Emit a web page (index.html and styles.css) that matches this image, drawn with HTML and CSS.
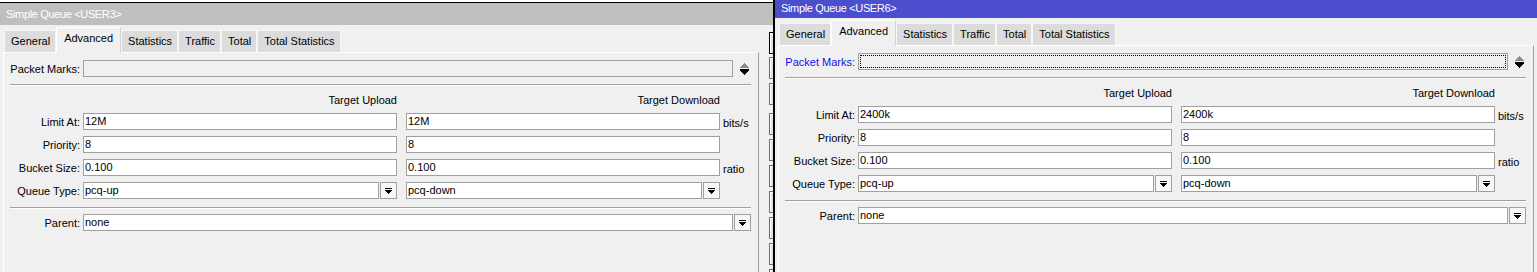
FILE: index.html
```html
<!DOCTYPE html>
<html lang="en">
  <head>
    <meta charset="UTF-8" />
    <meta name="viewport" content="width=device-width, initial-scale=1.0" />
    <title>Simple Queue</title>
    <link rel="stylesheet" href="styles.css">
  </head>
  <body>
    <!-- back window -->
    <div class="window back">
      <div class="titlebar">Simple Queue &lt;USER3&gt;</div>
      <div class="frame">
        <div class="main">
          <div class="tabs">
            <div class="tab">General</div>
            <div class="tab active">Advanced</div>
            <div class="tab">Statistics</div>
            <div class="tab">Traffic</div>
            <div class="tab">Total</div>
            <div class="tab">Total Statistics</div>
          </div>
          <div class="panel">
            <div class="row">
              <div class="label">Packet Marks:</div>
              <div class="input wide disabled"></div>
              <svg class="updown" width="9" height="12" viewBox="0 0 9 12">
                <path fill="#8c8c8c" d="M4 0h1v1h1v1h1v1h1v1h1v1H0V4h1V3h1V2h1V1h1z" />
                <rect y="6" width="9" height="1" />
                <path d="M0 7h9v1H8v1H7v1H6v1H5v1H4v-1H3v-1H2V9H1V8H0z" />
              </svg>
            </div>
            <div class="sep"></div>
            <div class="heads">
              <div class="head">Target Upload</div>
              <div class="head second">Target Download</div>
            </div>
            <div class="row">
              <div class="label">Limit At:</div>
              <div class="input half">12M</div>
              <div class="input half second">12M</div>
              <div class="unit">bits/s</div>
            </div>
            <div class="row">
              <div class="label">Priority:</div>
              <div class="input half">8</div>
              <div class="input half second">8</div>
            </div>
            <div class="row">
              <div class="label">Bucket Size:</div>
              <div class="input half">0.100</div>
              <div class="input half second">0.100</div>
              <div class="unit">ratio</div>
            </div>
            <div class="row">
              <div class="label">Queue Type:</div>
              <div class="input combo">pcq-up</div>
              <div class="drop"><svg width="7" height="6" viewBox="0 0 7 6"><rect width="7" height="1" /><path d="M0 2h7v1H6v1H5v1H4v1H3V5H2V4H1V3H0z" /></svg></div>
              <div class="input combo second">pcq-down</div>
              <div class="drop"><svg width="7" height="6" viewBox="0 0 7 6"><rect width="7" height="1" /><path d="M0 2h7v1H6v1H5v1H4v1H3V5H2V4H1V3H0z" /></svg></div>
            </div>
            <div class="sep lower"></div>
            <div class="row">
              <div class="label">Parent:</div>
              <div class="input wide">none</div>
              <div class="drop"><svg width="7" height="6" viewBox="0 0 7 6"><rect width="7" height="1" /><path d="M0 2h7v1H6v1H5v1H4v1H3V5H2V4H1V3H0z" /></svg></div>
            </div>
          </div>
        </div>
        <!-- OK / Cancel / Apply ... column, mostly hidden under the front window -->
        <div class="buttons">
          <div class="btn default"></div>
          <div class="btn"></div>
          <div class="btn spaced"></div>
          <div class="btn"></div>
          <div class="btn"></div>
          <div class="btn"></div>
          <div class="btn"></div>
          <div class="btn"></div>
          <div class="btn"></div>
          <div class="btn"></div>
        </div>
      </div>
    </div>

    <!-- front window -->
    <div class="window front">
      <div class="titlebar">Simple Queue &lt;USER6&gt;</div>
      <div class="frame">
        <div class="main">
          <div class="tabs">
            <div class="tab">General</div>
            <div class="tab active">Advanced</div>
            <div class="tab">Statistics</div>
            <div class="tab">Traffic</div>
            <div class="tab">Total</div>
            <div class="tab">Total Statistics</div>
          </div>
          <div class="panel">
            <div class="row">
              <div class="label focused">Packet Marks:</div>
              <div class="input wide disabled focus"></div>
              <svg class="updown" width="9" height="12" viewBox="0 0 9 12">
                <path fill="#8c8c8c" d="M4 0h1v1h1v1h1v1h1v1h1v1H0V4h1V3h1V2h1V1h1z" />
                <rect y="6" width="9" height="1" />
                <path d="M0 7h9v1H8v1H7v1H6v1H5v1H4v-1H3v-1H2V9H1V8H0z" />
              </svg>
            </div>
            <div class="sep"></div>
            <div class="heads">
              <div class="head">Target Upload</div>
              <div class="head second">Target Download</div>
            </div>
            <div class="row">
              <div class="label">Limit At:</div>
              <div class="input half">2400k</div>
              <div class="input half second">2400k</div>
              <div class="unit">bits/s</div>
            </div>
            <div class="row">
              <div class="label">Priority:</div>
              <div class="input half">8</div>
              <div class="input half second">8</div>
            </div>
            <div class="row">
              <div class="label">Bucket Size:</div>
              <div class="input half">0.100</div>
              <div class="input half second">0.100</div>
              <div class="unit">ratio</div>
            </div>
            <div class="row">
              <div class="label">Queue Type:</div>
              <div class="input combo">pcq-up</div>
              <div class="drop"><svg width="7" height="6" viewBox="0 0 7 6"><rect width="7" height="1" /><path d="M0 2h7v1H6v1H5v1H4v1H3V5H2V4H1V3H0z" /></svg></div>
              <div class="input combo second">pcq-down</div>
              <div class="drop"><svg width="7" height="6" viewBox="0 0 7 6"><rect width="7" height="1" /><path d="M0 2h7v1H6v1H5v1H4v1H3V5H2V4H1V3H0z" /></svg></div>
            </div>
            <div class="sep lower"></div>
            <div class="row">
              <div class="label">Parent:</div>
              <div class="input wide">none</div>
              <div class="drop"><svg width="7" height="6" viewBox="0 0 7 6"><rect width="7" height="1" /><path d="M0 2h7v1H6v1H5v1H4v1H3V5H2V4H1V3H0z" /></svg></div>
            </div>
          </div>
        </div>
      </div>
    </div>
  </body>
</html>
```

FILE: styles.css
```css
body {
  margin: 0;
  width: 1537px;
  height: 272px;
  overflow: hidden;
  position: relative;
  background: #fff;
  font-family: "Liberation Sans", Arial, sans-serif;
  font-size: 11px;
  color: #000;
}
.window {
  position: absolute;
  overflow: hidden;
  background: #f0f0f0;
}
.window.back {
  left: 0;
  top: 2px;
  width: 773px;
  height: 269px;
  border-top: 1px solid #000;
}
.window.front {
  left: 773px;
  top: 0;
  width: 762px;
  height: 272px;
  border-left: 2px solid #000;
}
.titlebar {
  height: 22px;
  line-height: 22px;
  padding-left: 6px;
  color: #fff;
  background: #bfbfbf;
  letter-spacing: -0.35px;
  white-space: nowrap;
}
.front .titlebar {
  height: 18px;
  line-height: 17px;
  background: #4b4fcd;
}
.frame {
  display: flex;
  align-items: flex-start;
}
.main {
  width: 759px;
  flex: none;
}
.tabs {
  display: flex;
  align-items: flex-end;
  height: 27px;
  padding-left: 4px;
}
.tab {
  box-sizing: border-box;
  height: 22px;
  line-height: 20px;
  padding: 0 5px 0 6px;
  background: #dcdcdc;
  border: 1px solid #f7f7f7;
  border-bottom: none;
  white-space: nowrap;
}
.tab.active {
  position: relative;
  z-index: 1;
  height: 26px;
  line-height: 21px;
  margin-bottom: -1px;
  padding: 0 7px;
  background: #f0f0f0;
  border-color: #fff;
  border-right-color: #d4d4d4;
}
.panel {
  box-sizing: border-box;
  display: flex;
  flex-direction: column;
  width: 756px;
  height: 260px;
  margin-left: 3px;
  padding-top: 7px;
  border-top: 1px solid #fff;
  border-left: 1px solid #fff;
  border-right: 1px solid #a0a0a0;
}
.row {
  display: flex;
  align-items: center;
  height: 17px;
  margin-bottom: 6px;
}
.label {
  width: 76px;
  margin-right: 3px;
  text-align: right;
  white-space: nowrap;
}
.label.focused {
  color: #1010f0;
}
.input {
  box-sizing: border-box;
  height: 17px;
  line-height: 15px;
  padding-left: 1px;
  background: #fff;
  border: 1px solid #a0a0a0;
  white-space: nowrap;
  overflow: hidden;
}
.input.disabled {
  background: #f0f0f0;
}
.input.focus {
  outline: 1px dotted #000;
  outline-offset: -3px;
}
.input.wide {
  width: 650px;
}
.input.half {
  width: 314px;
}
.input.combo {
  width: 296px;
}
.second {
  margin-left: 9px;
}
.drop {
  box-sizing: border-box;
  width: 17px;
  height: 17px;
  margin-left: 1px;
  display: flex;
  align-items: center;
  justify-content: center;
  background: #f7f7f7;
  border: 1px solid #a0a0a0;
}
.updown {
  margin-left: 7px;
}
.unit {
  margin-left: 3px;
  padding-top: 2px;
}
.sep {
  width: 741px;
  margin: 1px 0 0 6px;
  border-top: 1px solid #a0a0a0;
  border-bottom: 1px solid #fff;
}
.sep.lower {
  margin-top: 2px;
  margin-bottom: 5px;
}
.heads {
  display: flex;
  height: 16px;
  line-height: 16px;
  margin: 6px 0 5px 79px;
}
.head {
  width: 314px;
  text-align: right;
  white-space: nowrap;
}
.buttons {
  margin-left: 10px;
  padding-top: 7px;
}
.btn {
  box-sizing: border-box;
  width: 90px;
  height: 22px;
  margin-bottom: 4px;
  background: #e1e1e1;
  border: 1px solid #707070;
  box-shadow: inset 1px 1px 0 #fff;
}
.btn.default {
  margin-bottom: 3px;
  border-color: #000;
}
.btn.spaced {
  margin-bottom: 8px;
}
```
